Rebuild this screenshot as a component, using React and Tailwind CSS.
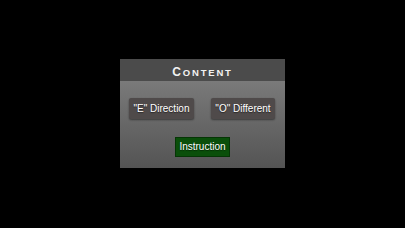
import React from 'react';

function GreyButton({ label, w }) {
  return (
    <button
      className={`${w} h-[21px] rounded-[2px] bg-[#4f4a4a] text-[10px] leading-none text-white shadow-[0_1px_2px_rgba(0,0,0,0.45)] [text-shadow:0_1px_1px_rgba(0,0,0,0.5)]`}
    >
      {label}
    </button>
  );
}

export default function App() {
  return (
    <div className="flex h-[228px] w-[405px] items-start justify-center bg-black pt-[59px] font-['Liberation_Sans',Arial,sans-serif]">
      <div className="flex h-[109px] w-[165px] flex-col">
        <div className="flex h-[22px] items-center justify-center bg-[#4b4b4b] pt-[1px]">
          <span className="font-bold leading-none tracking-[1.8px] text-[#f2f2f2]">
            <span className="text-[12px]">C</span>
            <span className="text-[9.5px]">ONTENT</span>
          </span>
        </div>
        <div className="flex flex-1 flex-col items-center gap-[18px] bg-gradient-to-b from-[#7a7a7a] to-[#545454] pt-[17px]">
          <div className="flex w-full gap-[17px] px-[9px]">
            <GreyButton label={'"E" Direction'} w="w-[65px]" />
            <GreyButton label={'"O" Different'} w="w-[64px]" />
          </div>
          <button className="h-[20px] w-[55px] border border-[#053605] bg-[#0a4f0a] text-[10px] leading-none text-white [text-shadow:0_1px_1px_rgba(0,0,0,0.5)]">
            Instruction
          </button>
        </div>
      </div>
    </div>
  );
}
